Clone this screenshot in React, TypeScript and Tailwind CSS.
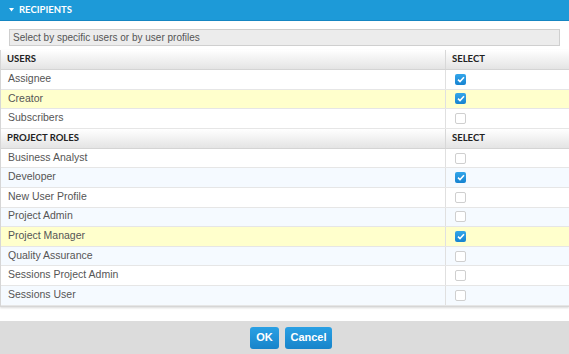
import React from "react";

type Row = { name: string; checked: boolean; bg: string };

const users: Row[] = [
  { name: "Assignee", checked: true, bg: "bg-white" },
  { name: "Creator", checked: true, bg: "bg-[#ffffcc]" },
  { name: "Subscribers", checked: false, bg: "bg-white" },
];

const roles: Row[] = [
  { name: "Business Analyst", checked: false, bg: "bg-white" },
  { name: "Developer", checked: true, bg: "bg-[#f5faff]" },
  { name: "New User Profile", checked: false, bg: "bg-white" },
  { name: "Project Admin", checked: false, bg: "bg-[#f5faff]" },
  { name: "Project Manager", checked: true, bg: "bg-[#ffffcc]" },
  { name: "Quality Assurance", checked: false, bg: "bg-[#f5faff]" },
  { name: "Sessions Project Admin", checked: false, bg: "bg-white" },
  { name: "Sessions User", checked: false, bg: "bg-[#f5faff]" },
];

function Checkbox({ checked }: { checked: boolean }) {
  if (checked) {
    return (
      <span className="flex h-[11px] w-[11px] items-center justify-center rounded-[2px] bg-gradient-to-b from-[#33a6ea] to-[#1583d0]">
        <svg width="8" height="7" viewBox="0 0 8 7">
          <path d="M1 3.6 L3 5.5 L7 1.3" fill="none" stroke="white" strokeWidth="1.6" />
        </svg>
      </span>
    );
  }
  return <span className="block h-[11px] w-[11px] rounded-[2px] border border-[#cfcfcf] bg-white" />;
}

function SectionHeader({ title }: { title: string }) {
  return (
    <div className="flex h-[20px] border-b border-[#d4d4d4] bg-gradient-to-b from-white to-[#e4e4e4] font-['Lato',sans-serif] text-[9.5px] font-bold text-[#222]">
      <div className="flex w-[445px] items-center border-r border-[#d8d8d8] pl-[6px]">{title}</div>
      <div className="flex flex-1 items-center pl-[6px]">SELECT</div>
    </div>
  );
}

function Rows({ rows }: { rows: Row[] }) {
  return (
    <>
      {rows.map((r) => (
        <div key={r.name} className={`flex h-[19.6px] border-b border-[#e6e6e6] ${r.bg}`}>
          <div className="flex w-[445px] items-center border-r border-[#e0e0e0] pb-[1px] pl-[7px] text-[10.5px] text-[#555]">
            {r.name}
          </div>
          <div className="flex flex-1 items-center pl-[9px]">
            <Checkbox checked={r.checked} />
          </div>
        </div>
      ))}
    </>
  );
}

export default function App() {
  return (
    <div className="flex h-[354px] w-[569px] flex-col bg-white font-['Liberation_Sans',Arial,sans-serif]">
      <div className="flex h-[21px] items-center gap-[5px] border-b border-[#1586c2] bg-[#1d9ad8] pl-[9px] font-['Lato',sans-serif] text-[9.5px] font-bold text-white">
        <svg width="5" height="4" viewBox="0 0 5 4">
          <path d="M0 0 H5 L2.5 3.5 Z" fill="white" />
        </svg>
        <span>RECIPIENTS</span>
      </div>

      <div className="px-[9px] pt-[8px]">
        <div className="flex h-[17px] items-center border border-[#cfcfcf] bg-[#ececec] pl-[3px] text-[10px] text-[#555]">
          Select by specific users or by user profiles
        </div>
      </div>

      <div className="mt-[4px] border-b border-l border-[#d6d6d6] shadow-[0_1px_2px_rgba(0,0,0,0.15)]">
        <SectionHeader title="USERS" />
        <Rows rows={users} />
        <SectionHeader title="PROJECT ROLES" />
        <Rows rows={roles} />
      </div>

      <div className="h-[14px]" />

      <div className="flex flex-1 items-start justify-center gap-[6px] bg-[#dcdcdc] pl-[13px] pt-[6px]">
        <button className="h-[22px] w-[29px] rounded-[3px] bg-gradient-to-b from-[#2aa0e4] to-[#1784ca] text-[11px] font-bold text-white">
          OK
        </button>
        <button className="h-[22px] w-[47px] rounded-[3px] bg-gradient-to-b from-[#2aa0e4] to-[#1784ca] text-[11px] font-bold text-white">
          Cancel
        </button>
      </div>
    </div>
  );
}
